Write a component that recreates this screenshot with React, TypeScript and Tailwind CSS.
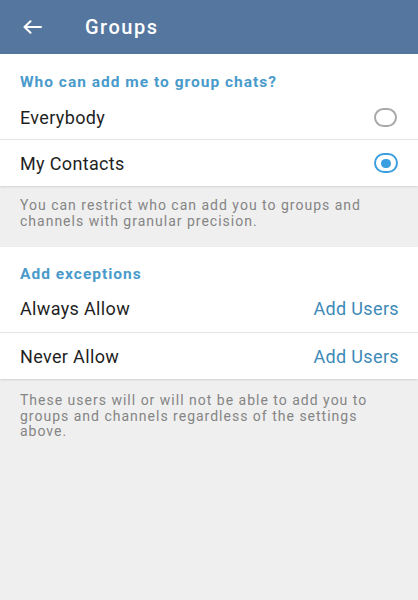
import React from "react";

function Radio({ checked }: { checked: boolean }) {
  return checked ? (
    <div className="w-[24px] h-[20px] rounded-full border-[2px] border-[#3a9ee0] flex items-center justify-center">
      <div className="w-[10px] h-[9px] rounded-full bg-[#3a9ee0]" />
    </div>
  ) : (
    <div className="w-[23px] h-[19px] rounded-full border-[2px] border-[#a9a9a9]" />
  );
}

export default function App() {
  return (
    <div className="w-[418px] h-[600px] bg-[#efefef] flex flex-col" style={{ fontFamily: "Roboto, 'Noto Sans', sans-serif" }}>
      <div className="h-[54px] bg-[#55769f] flex items-center shrink-0">
        <svg className="ml-[23px]" width="19" height="14" viewBox="0 0 19 14" fill="none" stroke="white" strokeWidth="2" strokeLinecap="round" strokeLinejoin="round">
          <path d="M18 7H1.5M7.5 1.2L1.5 7l6 5.8" />
        </svg>
        <span className="ml-[43px] text-white text-[20px] font-medium tracking-[1.5px]">Groups</span>
      </div>
      <div className="bg-white shadow-[0_1px_2px_rgba(0,0,0,0.12)]">
        <div className="h-[41px] pt-[18px] px-[20px] leading-[20px] text-[#4a9bcb] text-[15.5px] font-bold tracking-[1px]">Who can add me to group chats?</div>
        <div className="h-[45px] flex items-center justify-between pl-[20px] pr-[21px] border-b border-[#e4e4e4]">
          <span className="text-[18px] text-[#1f1f1f] tracking-[0.35px]">Everybody</span>
          <Radio checked={false} />
        </div>
        <div className="h-[46px] flex items-center justify-between pl-[20px] pr-[20px]">
          <span className="text-[18px] text-[#1f1f1f] tracking-[0.35px]">My Contacts</span>
          <Radio checked={true} />
        </div>
      </div>
      <div className="h-[61px] px-[20px] pt-[12px] text-[14px] leading-[15.5px] tracking-[1px] text-[#858585]">
        You can restrict who can add you to groups and
        <br />
        channels with granular precision.
      </div>
      <div className="bg-white shadow-[0_1px_2px_rgba(0,0,0,0.12)]">
        <div className="h-[38px] pt-[17px] px-[20px] leading-[20px] text-[#4a9bcb] text-[15.5px] font-bold tracking-[1px]">Add exceptions</div>
        <div className="h-[48px] flex items-center justify-between pl-[20px] pr-[19px] border-b border-[#e4e4e4]">
          <span className="text-[18px] text-[#1f1f1f] tracking-[0.35px]">Always Allow</span>
          <span className="text-[18px] text-[#3d8ab7] tracking-[0.35px]">Add Users</span>
        </div>
        <div className="h-[46px] flex items-center justify-between pl-[20px] pr-[19px]">
          <span className="text-[18px] text-[#1f1f1f] tracking-[0.35px]">Never Allow</span>
          <span className="text-[18px] text-[#3d8ab7] tracking-[0.35px]">Add Users</span>
        </div>
      </div>
      <div className="px-[20px] pt-[14px] text-[14px] leading-[15.5px] tracking-[1px] text-[#858585]">
        These users will or will not be able to add you to
        <br />
        groups and channels regardless of the settings
        <br />
        above.
      </div>
    </div>
  );
}
